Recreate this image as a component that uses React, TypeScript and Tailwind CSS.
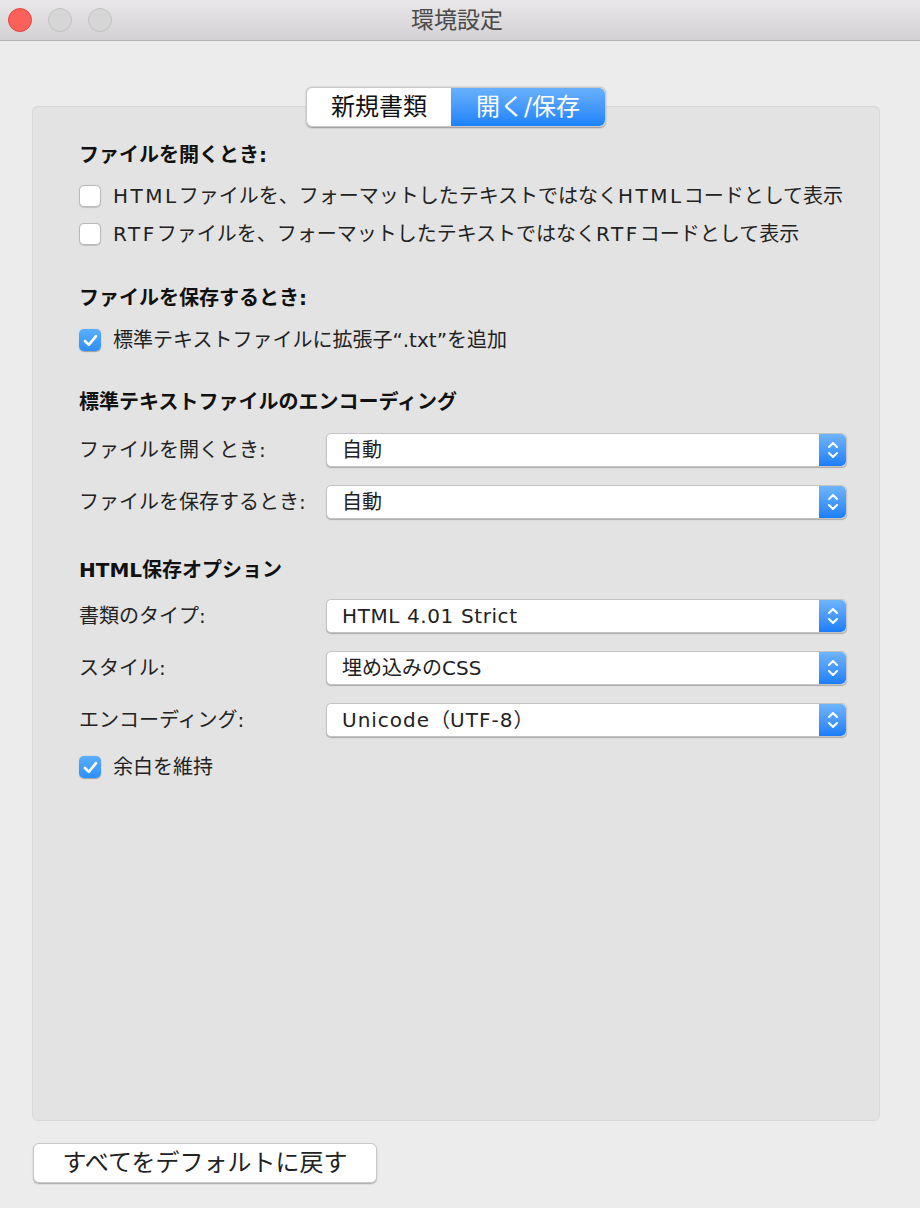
import React from 'react';

const font = { fontFamily: '"DejaVu Sans", "Noto Sans CJK JP", sans-serif' };

// Latin runs in the original are set a little wider than DejaVu gives
const L: React.FC<{ children: React.ReactNode }> = ({ children }) => (
  <span className="tracking-[2.5px]">{children}</span>
);

const Checkbox: React.FC<{ checked?: boolean; label: React.ReactNode }> = ({ checked, label }) => (
  <div className="h-[38px] flex items-center gap-[12px]">
    {checked ? (
      <div className="w-[22px] h-[22px] rounded-[5px] bg-gradient-to-b from-[#5aaefc] to-[#2b8ffb] flex items-center justify-center shadow-[0_0.5px_1px_rgba(0,0,0,0.3)]">
        <svg width="15" height="13" viewBox="0 0 15 13" fill="none">
          <path d="M2 7 L5.8 10.8 L13 2.2" stroke="white" strokeWidth="2.6" strokeLinecap="round" strokeLinejoin="round" />
        </svg>
      </div>
    ) : (
      <div className="w-[22px] h-[22px] rounded-[5px] bg-white border border-[#b9b9b9] shadow-[0_0.5px_1px_rgba(0,0,0,0.15)]" />
    )}
    <span className="text-[20px] text-[#222]">{label}</span>
  </div>
);

const Popup: React.FC<{ label: string; value: React.ReactNode }> = ({ label, value }) => (
  <div className="h-[52px] flex items-center">
    <span className="w-[247px] text-[20px] text-[#222]">{label}</span>
    <div className="w-[521px] h-[34px] flex rounded-[5px] bg-white border-[0.5px] border-[#c4c4c4] shadow-[0_1px_1px_rgba(0,0,0,0.25)]">
      <div className="flex-1 flex items-center pl-[15px] text-[20px] text-[#222]">{value}</div>
      <div className="w-[27px] h-full rounded-r-[5px] bg-gradient-to-b from-[#6fb4fb] to-[#1a7ef9] flex items-center justify-center">
        <svg width="14" height="22" viewBox="0 0 14 22" fill="none">
          <path d="M3 8 L7 4 L11 8" stroke="white" strokeWidth="2" strokeLinecap="round" strokeLinejoin="round" />
          <path d="M3 14 L7 18 L11 14" stroke="white" strokeWidth="2" strokeLinecap="round" strokeLinejoin="round" />
        </svg>
      </div>
    </div>
  </div>
);

const Header: React.FC<{ text: string; className?: string }> = ({ text, className }) => (
  <div className={`h-[28px] flex items-center text-[20px] font-bold text-[#111] ${className ?? ''}`}>{text}</div>
);

const App: React.FC = () => {
  return (
    <div className="w-[920px] h-[1208px] bg-[#ececec] flex flex-col" style={font}>
      <div className="h-[41px] shrink-0 relative flex items-center justify-center bg-gradient-to-b from-[#e9e7e9] to-[#d3d1d3] border-b border-[#b3b3b3]">
        <div className="absolute left-[8px] top-[8px] flex gap-[16px]">
          <div className="w-[24px] h-[24px] rounded-full bg-[#fc605b] border border-[#de4a45]" />
          <div className="w-[24px] h-[24px] rounded-full bg-[#d6d6d6] border border-[#c2c2c2]" />
          <div className="w-[24px] h-[24px] rounded-full bg-[#d6d6d6] border border-[#c2c2c2]" />
        </div>
        <span className="text-[23px] text-[#4a4a4a] -ml-[6px]">環境設定</span>
      </div>

      <div className="pl-[32px] pr-[40px] flex flex-col">
        <div className="mt-[46px] self-center relative z-10 flex h-[40px] rounded-[6px] shadow-[0_0.5px_1.5px_rgba(0,0,0,0.35)] border-[0.5px] border-[#c8c8c8]">
          <div className="w-[144px] flex items-center justify-center bg-white rounded-l-[6px] text-[24px] text-[#111]">新規書類</div>
          <div className="w-[154px] flex items-center justify-center bg-gradient-to-b from-[#68b0fc] to-[#1a82fb] rounded-r-[6px] text-[24px] text-white">開く/保存</div>
        </div>

        <div className="-mt-[21px] h-[1015px] rounded-[6px] bg-[#e3e3e3] border border-[#d8d8d8] pt-[34px] pl-[46px] pr-[32px] flex flex-col">
          <Header text="ファイルを開くとき:" />
          <div className="mt-[8px]">
            <Checkbox label={<><L>HTML</L>ファイルを、フォーマットしたテキストではなく<L>HTML</L>コードとして表示</>} />
            <Checkbox label={<><L>RTF</L>ファイルを、フォーマットしたテキストではなく<L>RTF</L>コードとして表示</>} />
          </div>

          <Header text="ファイルを保存するとき:" className="mt-[31px]" />
          <div className="mt-[9px]">
            <Checkbox checked label="標準テキストファイルに拡張子“.txt”を追加" />
          </div>

          <Header text="標準テキストファイルのエンコーディング" className="mt-[29px]" />
          <div className="mt-[8px]">
            <Popup label="ファイルを開くとき:" value="自動" />
            <Popup label="ファイルを保存するとき:" value="自動" />
          </div>

          <Header text="HTML保存オプション" className="mt-[28px]" />
          <div className="mt-[6px]">
            <Popup label="書類のタイプ:" value={<span className="tracking-[0.6px]">HTML 4.01 Strict</span>} />
            <Popup label="スタイル:" value="埋め込みのCSS" />
            <Popup label="エンコーディング:" value={<><span className="tracking-[1px]">Unicode</span>（<span className="tracking-[1px]">UTF-8</span>）</>} />
          </div>
          <div className="mt-[2px]">
            <Checkbox checked label="余白を維持" />
          </div>
        </div>

        <button className="mt-[22px] ml-[1px] w-[344px] h-[40px] rounded-[6px] bg-white border-[0.5px] border-[#c8c8c8] shadow-[0_1px_1.5px_rgba(0,0,0,0.3)] text-[24px] text-[#222] flex items-center justify-center">
          すべてをデフォルトに戻す
        </button>
      </div>
    </div>
  );
};

export default App;
